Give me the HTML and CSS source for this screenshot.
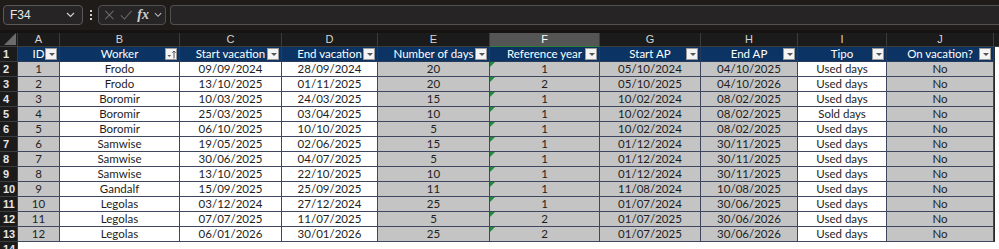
FILE: index.html
```html
<!DOCTYPE html>
<html>
<head>
<meta charset="utf-8">
<link rel="stylesheet" href="styles.css">
</head>
<body>
<div class="app">
  <div class="toolbar">
    <div class="namebox"><span>F34</span><svg class="chev" width="9" height="6" viewBox="0 0 9 6"><path d="M1 1 L4.5 4.5 L8 1" fill="none" stroke="#cfcfcf" stroke-width="1.2"/></svg></div>
    <div class="vdots"><i></i><i></i><i></i></div>
    <div class="fnbox">
      <svg width="12" height="12" viewBox="0 0 12 12"><path d="M1.5 1.5 L10.5 10.5 M10.5 1.5 L1.5 10.5" stroke="#6a6a6a" stroke-width="1.2"/></svg>
      <svg width="14" height="12" viewBox="0 0 14 12"><path d="M1 6.5 L5 10.5 L13 1.5" fill="none" stroke="#6a6a6a" stroke-width="1.2"/></svg>
      <span class="fx">fx</span>
      <svg width="9" height="6" viewBox="0 0 9 6"><path d="M1 1 L4.5 4.5 L8 1" fill="none" stroke="#bdbdbd" stroke-width="1.2"/></svg>
    </div>
    <div class="formula"></div>
  </div>
  <div class="sheet">
    <div class="grid">
      <div class="corner"><svg width="12" height="12" viewBox="0 0 12 12"><path d="M12 0 L12 12 L0 12 Z" fill="#6b6b6b"/></svg></div>
      <div class="ch">A</div><div class="ch">B</div><div class="ch">C</div><div class="ch">D</div><div class="ch">E</div><div class="ch sel">F</div><div class="ch">G</div><div class="ch">H</div><div class="ch">I</div><div class="ch">J</div><div class="ch blank"></div>

      <div class="rn">1</div>
      <div class="th">ID<span class="dd"></span></div>
      <div class="th">Worker<span class="dd sort"><svg width="11" height="11" viewBox="0 0 11 11"><path d="M1.5 6 L5 6 L3.25 8 Z" fill="#555"/><path d="M8 9.5 L8 2 M6.3 3.7 L8 2 L9.7 3.7" fill="none" stroke="#555" stroke-width="1"/></svg></span></div>
      <div class="th">Start vacation<span class="dd"></span></div>
      <div class="th">End vacation<span class="dd"></span></div>
      <div class="th">Number of days<span class="dd"></span></div>
      <div class="th">Reference year<span class="dd"></span></div>
      <div class="th">Start AP<span class="dd"></span></div>
      <div class="th">End AP<span class="dd"></span></div>
      <div class="th">Tipo<span class="dd"></span></div>
      <div class="th">On vacation?<span class="dd"></span></div>
      <div class="ec"></div>

      <div class="rn">2</div><div class="c g">1</div><div class="c">Frodo</div><div class="c">09/09/2024</div><div class="c">28/09/2024</div><div class="c g">20</div><div class="c g t">1</div><div class="c g">05/10/2024</div><div class="c g">04/10/2025</div><div class="c">Used days</div><div class="c g">No</div><div class="ec"></div>
      <div class="rn">3</div><div class="c g">2</div><div class="c">Frodo</div><div class="c">13/10/2025</div><div class="c">01/11/2025</div><div class="c g">20</div><div class="c g t">2</div><div class="c g">05/10/2025</div><div class="c g">04/10/2026</div><div class="c">Used days</div><div class="c g">No</div><div class="ec"></div>
      <div class="rn">4</div><div class="c g">3</div><div class="c">Boromir</div><div class="c">10/03/2025</div><div class="c">24/03/2025</div><div class="c g">15</div><div class="c g t">1</div><div class="c g">10/02/2024</div><div class="c g">08/02/2025</div><div class="c">Used days</div><div class="c g">No</div><div class="ec"></div>
      <div class="rn">5</div><div class="c g">4</div><div class="c">Boromir</div><div class="c">25/03/2025</div><div class="c">03/04/2025</div><div class="c g">10</div><div class="c g t">1</div><div class="c g">10/02/2024</div><div class="c g">08/02/2025</div><div class="c">Sold days</div><div class="c g">No</div><div class="ec"></div>
      <div class="rn">6</div><div class="c g">5</div><div class="c">Boromir</div><div class="c">06/10/2025</div><div class="c">10/10/2025</div><div class="c g">5</div><div class="c g t">1</div><div class="c g">10/02/2024</div><div class="c g">08/02/2025</div><div class="c">Used days</div><div class="c g">No</div><div class="ec"></div>
      <div class="rn">7</div><div class="c g">6</div><div class="c">Samwise</div><div class="c">19/05/2025</div><div class="c">02/06/2025</div><div class="c g">15</div><div class="c g t">1</div><div class="c g">01/12/2024</div><div class="c g">30/11/2025</div><div class="c">Used days</div><div class="c g">No</div><div class="ec"></div>
      <div class="rn">8</div><div class="c g">7</div><div class="c">Samwise</div><div class="c">30/06/2025</div><div class="c">04/07/2025</div><div class="c g">5</div><div class="c g t">1</div><div class="c g">01/12/2024</div><div class="c g">30/11/2025</div><div class="c">Used days</div><div class="c g">No</div><div class="ec"></div>
      <div class="rn">9</div><div class="c g">8</div><div class="c">Samwise</div><div class="c">13/10/2025</div><div class="c">22/10/2025</div><div class="c g">10</div><div class="c g t">1</div><div class="c g">01/12/2024</div><div class="c g">30/11/2025</div><div class="c">Used days</div><div class="c g">No</div><div class="ec"></div>
      <div class="rn">10</div><div class="c g">9</div><div class="c">Gandalf</div><div class="c">15/09/2025</div><div class="c">25/09/2025</div><div class="c g">11</div><div class="c g t">1</div><div class="c g">11/08/2024</div><div class="c g">10/08/2025</div><div class="c">Used days</div><div class="c g">No</div><div class="ec"></div>
      <div class="rn">11</div><div class="c g">10</div><div class="c">Legolas</div><div class="c">03/12/2024</div><div class="c">27/12/2024</div><div class="c g">25</div><div class="c g t">1</div><div class="c g">01/07/2024</div><div class="c g">30/06/2025</div><div class="c">Used days</div><div class="c g">No</div><div class="ec"></div>
      <div class="rn">12</div><div class="c g">11</div><div class="c">Legolas</div><div class="c">07/07/2025</div><div class="c">11/07/2025</div><div class="c g">5</div><div class="c g t">2</div><div class="c g">01/07/2025</div><div class="c g">30/06/2026</div><div class="c">Used days</div><div class="c g">No</div><div class="ec"></div>
      <div class="rn">13</div><div class="c g">12</div><div class="c">Legolas</div><div class="c">06/01/2026</div><div class="c">30/01/2026</div><div class="c g">25</div><div class="c g t">2</div><div class="c g">01/07/2025</div><div class="c g">30/06/2026</div><div class="c">Used days</div><div class="c g">No</div><div class="ec"></div>
      <div class="rn">14</div>
    </div>
  </div>
</div>
</body>
</html>
```
FILE: styles.css
```css
* { box-sizing: border-box; }
html, body { margin: 0; padding: 0; }
body { width: 999px; height: 249px; overflow: hidden; background: #ffffff; font-family: Lato, "Liberation Sans", sans-serif; }
.app { width: 999px; height: 249px; overflow: hidden; }

.toolbar {
  height: 33px;
  background: #1f1b19;
  display: flex;
  align-items: center;
  padding: 0 0 0 3px;
  border-bottom: 3px solid #161311;
}
.namebox {
  width: 80px; height: 20px;
  border: 1px solid #585858;
  border-radius: 4px;
  background: #262424;
  display: flex; align-items: center; justify-content: space-between;
  padding: 0 7px 0 6px;
  color: #e8e8e8; font-size: 12px;
  font-family: "Liberation Sans", sans-serif;
}
.vdots { width: 15px; display: flex; flex-direction: column; align-items: center; gap: 2px; }
.vdots i { width: 2px; height: 2px; background: #cfcfcf; display: block; }
.fnbox {
  width: 68px; height: 20px;
  border: 1px solid #505050;
  border-radius: 4px;
  background: #262424;
  display: flex; align-items: center; gap: 5px;
  padding: 0 3px 0 5px;
}
.fx { font-family: "Liberation Serif", serif; font-style: italic; color: #d0d0d0; font-size: 14px; font-weight: bold; line-height: 1; }
.formula {
  flex: 1; height: 20px; margin-left: 4px;
  border: 1px solid #505050;
  border-right: none;
  border-radius: 4px 0 0 4px;
  background: #262424;
}

.sheet { background: #ffffff; }
.grid {
  display: grid;
  grid-template-columns: 18px 42px 120px 102px 96px 112px 110px 101px 97px 89px 107px 5px;
  grid-template-rows: 14px repeat(13, 15px) 15px;
}
.corner { background: #1b1b1b; border-right: 1px solid #3c3c3c; border-bottom: 1px solid #3c3c3c; display: flex; align-items: flex-end; justify-content: flex-end; padding: 1px; }
.ch {
  background: #1b1b1b; color: #d6d6d6;
  font-size: 11px; line-height: 13px; text-align: center;
  border-right: 1px solid #3c3c3c; border-bottom: 1px solid #3c3c3c;
  font-family: "Liberation Sans", sans-serif;
}
.ch.sel { background: #555555; color: #ffffff; border-bottom: 1px solid #2e7d32; }
.ch.blank { border-right: none; }
.rn {
  background: #1b1b1b; color: #e6e6e6;
  font-size: 11px; line-height: 14px;
  padding-left: 3px;
  border-bottom: 1px solid #3c3c3c;
  border-right: 1px solid #3c3c3c;
  font-family: "Liberation Sans", sans-serif;
  font-weight: bold;
}
.th {
  position: relative;
  background: #0b3464; color: #ffffff;
  font-size: 11.5px; line-height: 14px; text-align: center;
  border-right: 1px solid #2a3b5a; border-bottom: 1px solid #2a3b5a;
  white-space: nowrap;
}
.dd {
  position: absolute; right: 2px; top: 1px;
  width: 12px; height: 12px;
  background: #f4f4f4; border: 1px solid #9a9a9a;
}
.dd::after {
  content: ""; position: absolute; left: 3px; top: 4px;
  border-left: 3px solid transparent; border-right: 3px solid transparent; border-top: 3px solid #555;
}
.dd.sort::after { display: none; }
.dd.sort svg { display: block; margin: 0; }
.c {
  position: relative;
  background: #ffffff; color: #1e1e1e;
  font-size: 11.5px; line-height: 14px; text-align: center;
  border-right: 1px solid #3e4660; border-bottom: 1px solid #3e4660;
  white-space: nowrap;
}
.c.g { background: #c4c4c4; }
.c.t::before {
  content: ""; position: absolute; left: 0; top: 0;
  border-top: 5px solid #1f8a3a; border-right: 5px solid transparent;
}
.ec { background: #ffffff; border-left: 1px solid #2a2a2a; }
```
